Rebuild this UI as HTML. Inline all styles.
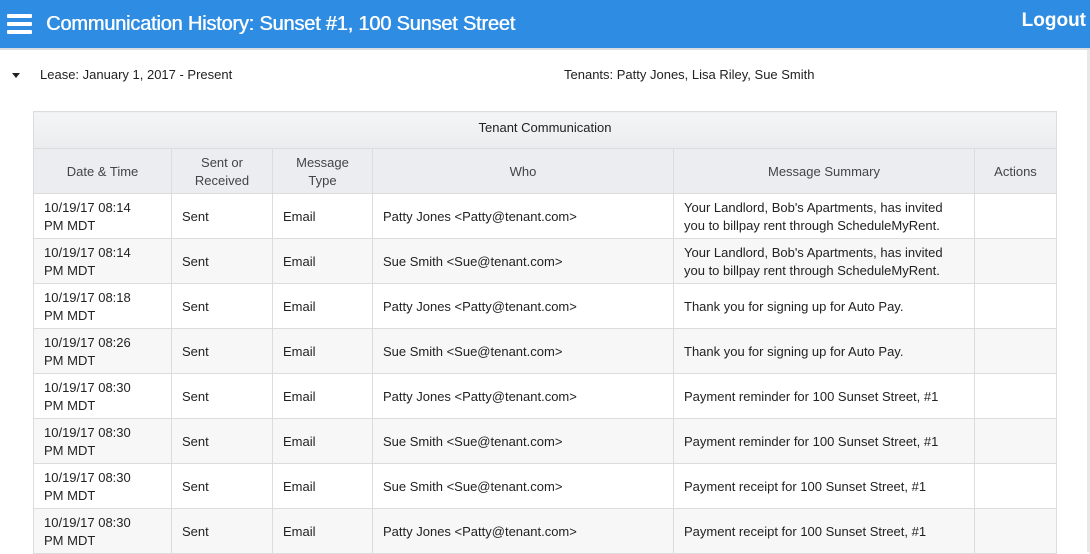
<!DOCTYPE html>
<html><head><style>
*{box-sizing:border-box}
body{margin:0;width:1090px;height:552px;overflow:hidden;background:#fff;font-family:"Liberation Sans",sans-serif;color:#333}
.hdr{position:absolute;left:0;top:0;width:1090px;height:50px;background:#2e8de3;border-bottom:2px solid #d9dde2}
.hdr h1{position:absolute;left:46px;top:13px;margin:0;font-size:20px;font-weight:normal;color:#fff;letter-spacing:-0.2px;text-shadow:0.5px 0 0 #fff}
.lo{position:absolute;right:4px;top:10px;font-size:19px;color:#fff;font-weight:bold}
.ham{position:absolute;left:7px;top:14px;width:25px}
.ham i{display:block;height:4px;background:#fff;margin-bottom:4px;border-radius:1px}
.edge{position:absolute;right:0;top:50px;width:3px;height:502px;background:#e6e8eb}
.tri{position:absolute;left:12px;top:73px;width:0;height:0;border-left:4px solid transparent;border-right:4px solid transparent;border-top:5px solid #222}
.t1{position:absolute;left:40px;top:67px;font-size:13px;color:#222}
.t2{position:absolute;left:564px;top:67px;font-size:13px;color:#222}
table{position:absolute;left:33px;top:111px;border-collapse:collapse;font-size:13px;color:#222}
td,th{border:1px solid #dcdcdc;padding:1px 10px 0;vertical-align:middle;line-height:18px}
th{font-weight:normal;color:#444;background:#ebedf0;height:45px;text-align:center}
.cap th{height:37px;background:linear-gradient(#f4f5f6,#eaecee);color:#222;padding-bottom:6px}
td{height:45px}
tr.o td{background:#fff}
tr.e td{background:#f7f7f7}
</style></head><body>
<div class="hdr"><div class="ham"><i></i><i></i><i></i></div><h1>Communication History: Sunset #1, 100 Sunset Street</h1><div class="lo">Logout</div></div>
<div class="edge"></div>
<div class="tri"></div>
<div class="t1">Lease: January 1, 2017 - Present</div>
<div class="t2">Tenants: Patty Jones, Lisa Riley, Sue Smith</div>
<table>
<tr class="cap"><th colspan="6">Tenant Communication</th></tr>
<tr><th style="width:138px">Date &amp; Time</th><th style="width:101px">Sent or<br>Received</th><th style="width:100px">Message<br>Type</th><th style="width:301px">Who</th><th style="width:301px">Message Summary</th><th style="width:82px">Actions</th></tr>
<tr class="o"><td>10/19/17 08:14<br>PM MDT</td><td>Sent</td><td>Email</td><td>Patty Jones &lt;Patty@tenant.com&gt;</td><td>Your Landlord, Bob's Apartments, has invited you to billpay rent through ScheduleMyRent.</td><td></td></tr>
<tr class="e"><td>10/19/17 08:14<br>PM MDT</td><td>Sent</td><td>Email</td><td>Sue Smith &lt;Sue@tenant.com&gt;</td><td>Your Landlord, Bob's Apartments, has invited you to billpay rent through ScheduleMyRent.</td><td></td></tr>
<tr class="o"><td>10/19/17 08:18<br>PM MDT</td><td>Sent</td><td>Email</td><td>Patty Jones &lt;Patty@tenant.com&gt;</td><td>Thank you for signing up for Auto Pay.</td><td></td></tr>
<tr class="e"><td>10/19/17 08:26<br>PM MDT</td><td>Sent</td><td>Email</td><td>Sue Smith &lt;Sue@tenant.com&gt;</td><td>Thank you for signing up for Auto Pay.</td><td></td></tr>
<tr class="o"><td>10/19/17 08:30<br>PM MDT</td><td>Sent</td><td>Email</td><td>Patty Jones &lt;Patty@tenant.com&gt;</td><td>Payment reminder for 100 Sunset Street, #1</td><td></td></tr>
<tr class="e"><td>10/19/17 08:30<br>PM MDT</td><td>Sent</td><td>Email</td><td>Sue Smith &lt;Sue@tenant.com&gt;</td><td>Payment reminder for 100 Sunset Street, #1</td><td></td></tr>
<tr class="o"><td>10/19/17 08:30<br>PM MDT</td><td>Sent</td><td>Email</td><td>Sue Smith &lt;Sue@tenant.com&gt;</td><td>Payment receipt for 100 Sunset Street, #1</td><td></td></tr>
<tr class="e"><td>10/19/17 08:30<br>PM MDT</td><td>Sent</td><td>Email</td><td>Patty Jones &lt;Patty@tenant.com&gt;</td><td>Payment receipt for 100 Sunset Street, #1</td><td></td></tr>
</table>
</body></html>
